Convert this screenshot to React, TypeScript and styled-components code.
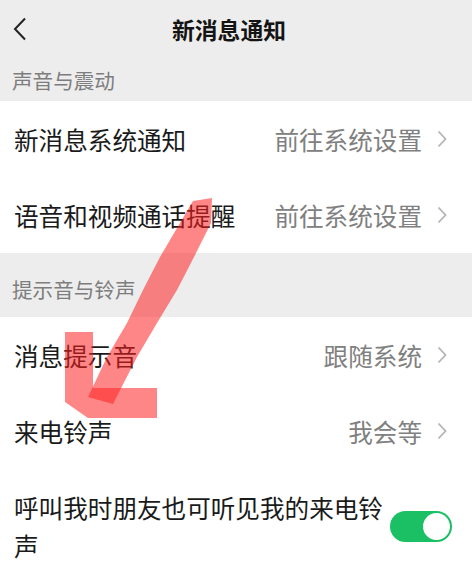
import React from 'react';
import styled, {createGlobalStyle} from 'styled-components';

const GlobalStyle = createGlobalStyle`
  html, body {
    margin: 0;
    padding: 0;
    background: #ededed;
  }
  body {
    font-family: "Noto Sans CJK SC", "Noto Sans", sans-serif;
  }
`;

interface IRow {
    label: string;
    value: string;
}

const soundRows: IRow[] = [
    {label: '新消息系统通知', value: '前往系统设置'},
    {label: '语音和视频通话提醒', value: '前往系统设置'},
];

const ringRows: IRow[] = [
    {label: '消息提示音', value: '跟随系统'},
    {label: '来电铃声', value: '我会等'},
];

const Chevron = () => (
    <ChevronIcon viewBox="0 0 10 18" width="10" height="18">
        <polyline points="1.5,1.5 8.5,9 1.5,16.5" fill="none" stroke="#b4b4b4" strokeWidth="1.8"/>
    </ChevronIcon>
)

const LinkRow = ({label, value}: IRow) => {
    return (
        <Row>
            <Label>{label}</Label>
            <Value>{value}</Value>
            <Chevron/>
        </Row>
    )
}

const App = () => {
    return (
        <Page>
            <GlobalStyle/>
            <Header>
                <Back viewBox="0 0 14 24" width="14" height="24">
                    <polyline points="12,1.5 2,12 12,22.5" fill="none" stroke="#222" strokeWidth="2"/>
                </Back>
                <Title>新消息通知</Title>
                <span/>
            </Header>

            <SectionTitle>声音与震动</SectionTitle>
            <Group>
                {soundRows.map(row => <LinkRow key={row.label} {...row}/>)}
            </Group>

            <SectionTitle $tall>提示音与铃声</SectionTitle>
            <Group>
                {ringRows.map(row => <LinkRow key={row.label} {...row}/>)}
                <SwitchRow>
                    <WrapLabel>呼叫我时朋友也可听见我的来电铃声</WrapLabel>
                    <Toggle $on>
                        <Knob/>
                    </Toggle>
                </SwitchRow>
            </Group>

            <Scribble viewBox="0 0 472 578" width="472" height="578">
                <path
                    d="M193 201 L212 198 L211 223 L194 257 L177 290 L157 323 L137 357 L113 404 L88 397 L107 357 L127 323 L143 290 L160 257 L180 223 Z"
                    fill="#ff1f1f" fillOpacity="0.54"/>
                <path
                    d="M65 332 L93 332 L93 388 L157 388 L157 418 L88 418 L65 402 Z"
                    fill="#ff1f1f" fillOpacity="0.54"/>
            </Scribble>
        </Page>
    )
}

const Page = styled.div`
  position: relative;
  width: 472px;
  min-height: 578px;
  overflow: hidden;
  background: #ededed;
`;

const Header = styled.div`
  height: 58px;
  display: grid;
  grid-template-columns: 1fr auto 1fr;
  align-items: center;
  padding: 0 27px 0 13px;
`;

const Back = styled.svg`
  display: block;
`;

const Title = styled.div`
  font-size: 22.8px;
  font-weight: 700;
  color: #141414;
`;

const SectionTitle = styled.div<{ $tall?: boolean }>`
  height: ${p => p.$tall ? '64px' : '43px'};
  box-sizing: border-box;
  padding: 0 12px ${p => p.$tall ? '8px' : '0'};
  display: flex;
  align-items: ${p => p.$tall ? 'flex-end' : 'center'};
  font-size: 20.6px;
  color: #7d7d7d;
  line-height: 40px;
`;

const Group = styled.div`
  background: #ffffff;
`;

const Row = styled.div`
  height: 76px;
  display: flex;
  align-items: center;
  padding: 0 25px 0 14px;
`;

const Label = styled.div`
  flex: 1;
  font-size: 24.6px;
  color: #1a1a1a;
  white-space: nowrap;
`;

const Value = styled.div`
  font-size: 24.6px;
  color: #808080;
  margin-right: 15px;
  white-space: nowrap;
`;

const ChevronIcon = styled.svg`
  display: block;
  flex-shrink: 0;
`;

const SwitchRow = styled.div`
  display: flex;
  align-items: center;
  padding: 19px 20px 20px 14px;
  gap: 4px;
`;

const WrapLabel = styled.div`
  flex: 1;
  font-size: 24.6px;
  line-height: 38px;
  color: #1a1a1a;
  max-width: 374px;
`;

const Toggle = styled.div<{ $on?: boolean }>`
  margin-left: auto;
  width: 62px;
  height: 31px;
  border-radius: 16px;
  background: ${p => p.$on ? '#1bbf64' : '#e5e5e5'};
  display: flex;
  align-items: center;
  justify-content: ${p => p.$on ? 'flex-end' : 'flex-start'};
  padding: 0 2px;
  box-sizing: border-box;
`;

const Knob = styled.div`
  width: 27px;
  height: 27px;
  border-radius: 50%;
  background: #ffffff;
`;

const Scribble = styled.svg`
  position: absolute;
  left: 0;
  top: 0;
  pointer-events: none;
`;

export default App;
